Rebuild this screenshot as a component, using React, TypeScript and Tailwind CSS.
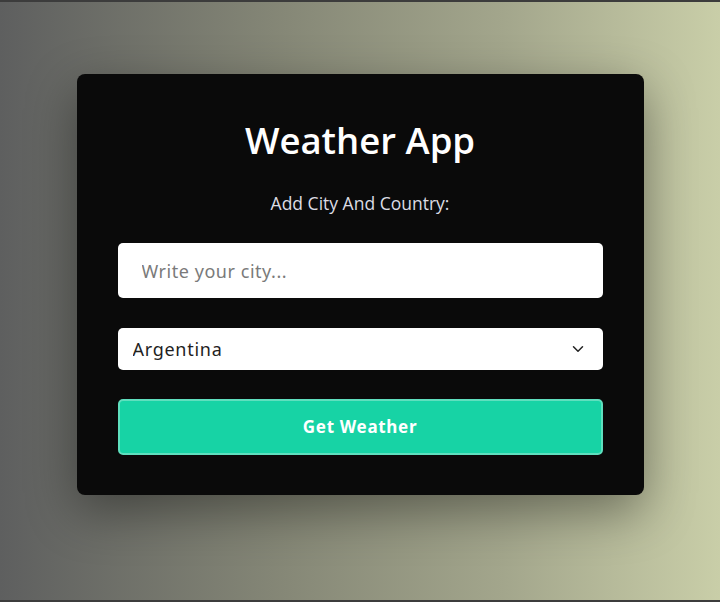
import { ChevronDown } from "lucide-react";

export default function App() {
  return (
    <div className="h-[602px] w-[720px] overflow-hidden border-t-2 border-b-2 border-[#3c3c3c] bg-[linear-gradient(90deg,#5e5f5f_0%,#868877_40%,#a3a68c_70%,#c9cea8_100%)] pt-[72px]">
      <div className="mx-auto w-[567px] rounded-lg bg-[#0a0a0a] px-[41px] pt-[43px] pb-[40px] shadow-[0_16px_50px_rgba(0,0,0,0.4)]">
        <h1 className="text-center font-['Open_Sans',sans-serif] text-[36.5px] font-semibold leading-[46px] text-white">
          Weather App
        </h1>
        <p className="mt-[28px] text-center font-['Open_Sans',sans-serif] text-[17.5px] leading-[24px] text-[#dcdce4]">
          Add City And Country:
        </p>
        <input
          type="text"
          placeholder="Write your city..."
          className="mt-[28px] block h-[55px] w-full rounded-[5px] bg-white px-6 font-['Noto_Sans',sans-serif] text-[18px] tracking-[0.03em] text-[#222] outline-none placeholder:text-[#7a7a7a]"
        />
        <div className="relative mt-[30px]">
          <select className="block h-[42px] w-full appearance-none rounded-[5px] bg-white px-[15px] font-['Noto_Sans',sans-serif] text-[18px] tracking-[0.04em] text-[#1f1f1f] outline-none">
            <option>Argentina</option>
          </select>
          <ChevronDown
            className="pointer-events-none absolute right-[16px] top-[12px] h-[18px] w-[18px] text-[#222]"
            strokeWidth={2}
          />
        </div>
        <button className="mt-[29px] block h-[56px] w-full rounded-[5px] border-2 border-[#5fdfbe] bg-[#17d3a5] font-['Noto_Sans',sans-serif] text-[17px] font-bold tracking-[0.04em] text-white">
          Get Weather
        </button>
      </div>
    </div>
  );
}
